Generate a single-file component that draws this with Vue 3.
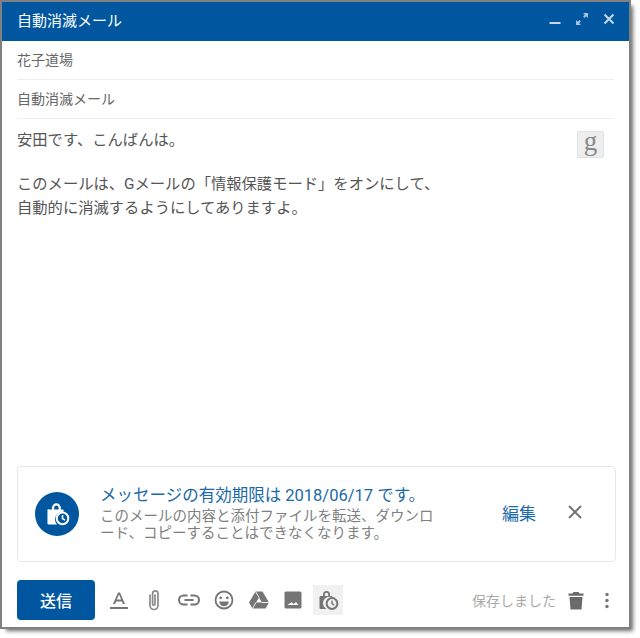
<script setup>
const tools = [
  { id: 'format', active: false },
  { id: 'attach', active: false },
  { id: 'link', active: false },
  { id: 'emoji', active: false },
  { id: 'drive', active: false },
  { id: 'photo', active: false },
  { id: 'lock', active: true },
]
</script>

<template>
  <div class="page">
    <div class="win">
      <header class="head">
        <span class="head-title">自動消滅メール</span>
        <div class="head-icons">
          <svg width="12" height="12" viewBox="0 0 12 12"><path d="M.5 10h11" stroke="#c4d6e8" stroke-width="2"/></svg>
          <svg width="14" height="14" viewBox="0 0 14 14" fill="#a9c3dc"><path d="M8 1h5v5l-1.800-1.800-1.700 1.700-1.400-1.400 1.700-1.700zM6 13H1V8l1.800 1.800 1.700-1.700 1.400 1.400-1.700 1.700z"/></svg>
          <svg width="12" height="12" viewBox="0 0 12 12"><path d="M1.500 1.500l9 9M10.500 1.500l-9 9" stroke="#c4d6e8" stroke-width="2"/></svg>
        </div>
      </header>
      <div class="field">花子道場</div>
      <div class="field">自動消滅メール</div>
      <div class="body">
        <div class="body-text">
          <p class="greet">安田です、こんばんは。</p>
          <p>このメールは、Gメールの「情報保護モード」をオンにして、<br>自動的に消滅するようにしてありますよ。</p>
        </div>
        <span class="g-btn">g</span>
      </div>
      <section class="notice">
        <span class="notice-badge">
          <svg width="29" height="29" viewBox="0 0 26 26">
            <path d="M5 8.500h3V7a4 4 0 0 1 8 0v1.500h1.500a1 1 0 0 1 1 1v1a7 7 0 0 0-6 11.500H5a1 1 0 0 1-1-1v-12a1 1 0 0 1 1-1zM10 8.500h4V7a2 2 0 0 0-4 0z" fill="#fff" fill-rule="evenodd"/>
            <circle cx="17.500" cy="16.500" r="5.200" fill="none" stroke="#fff" stroke-width="1.800"/>
            <path d="M17.500 13.500v3.200l2.300 1.300" fill="none" stroke="#fff" stroke-width="1.400"/>
          </svg>
        </span>
        <div class="notice-text">
          <div class="notice-title">メッセージの有効期限は 2018/06/17 です。</div>
          <div class="notice-desc">このメールの内容と添付ファイルを転送、ダウンロード、コピーすることはできなくなります。</div>
        </div>
        <span class="notice-edit">編集</span>
        <svg class="notice-close" width="14" height="14" viewBox="0 0 14 14"><path d="M1 1l12 12M13 1L1 13" stroke="#757575" stroke-width="2"/></svg>
      </section>
      <footer class="foot">
        <button class="send">送信</button>
        <div class="tools">
          <span v-for="t in tools" :key="t.id" class="tool" :class="{ on: t.active }">
            <svg width="24" height="24" viewBox="0 0 24 24" fill="#757575">
              <template v-if="t.id === 'format'">
                <path d="M11 4.500h2l5 11.500h-2.100l-1-2.600H9.100L8.100 16H6zm-1.200 7.100h4.400L12 6.400z"/>
                <path d="M3 19h18v2H3z"/>
              </template>
              <path v-else-if="t.id === 'attach'" d="M8 7v10.500a4 4 0 0 0 8 0V5.500a2.700 2.700 0 0 0-5.400 0V16a1.200 1.200 0 0 0 2.400 0V7" fill="none" stroke="#8a8a8a" stroke-width="1.700" stroke-linecap="round"/>
              <path v-else-if="t.id === 'link'" d="M10.500 7.500h-4a4.500 4.500 0 0 0 0 9h4M13.500 7.500h4a4.500 4.500 0 0 1 0 9h-4M7.500 12h9" fill="none" stroke="#757575" stroke-width="2"/>
              <template v-else-if="t.id === 'emoji'">
                <circle cx="12" cy="12" r="8.500" fill="none" stroke="#757575" stroke-width="1.800"/>
                <circle cx="8.700" cy="9.800" r="1.400"/><circle cx="15.300" cy="9.800" r="1.400"/>
                <path d="M7.200 13.500h9.600a4.800 4.800 0 0 1-9.600 0z"/>
              </template>
              <template v-else-if="t.id === 'drive'">
                <path d="M8.500 3.500h7L22 14.500l-3.500 6h-13L2 14.500zM12 9.500l-3 5h6z" fill-rule="evenodd"/>
                <path d="M8.500 3.500L12 9.500M9 14.500l-3.500 6M15 14.500h7" stroke="#fff" stroke-width=".9" fill="none"/>
              </template>
              <path v-else-if="t.id === 'photo'" d="M5 3.500h14a1.500 1.500 0 0 1 1.500 1.500v14a1.500 1.500 0 0 1-1.500 1.500H5A1.500 1.500 0 0 1 3.500 19V5A1.500 1.500 0 0 1 5 3.500zM6.500 17h11l-2.500-3-2.400 2-2.100-1.700z" fill-rule="evenodd"/>
              <template v-else>
                <path d="M4.500 8H7V6.500a3.500 3.500 0 0 1 7 0V8h1.500a1 1 0 0 1 1 1v.400A6.500 6.500 0 0 0 10.500 21h-6a1 1 0 0 1-1-1V9a1 1 0 0 1 1-1zM8.800 8h3.400V6.500a1.700 1.700 0 0 0-3.400 0z" fill-rule="evenodd"/>
                <circle cx="16" cy="15.500" r="5.400" fill="none" stroke="#757575" stroke-width="2"/>
                <path d="M16 12.400v3.300l2.300 1.400" fill="none" stroke="#757575" stroke-width="1.400"/>
              </template>
            </svg>
          </span>
        </div>
        <div class="foot-right">
          <span class="saved">保存しました</span>
          <svg class="trash" width="24" height="24" viewBox="0 0 24 24" fill="#6a6a6a"><path d="M5.500 9h13l-1 12.500h-11zM4.500 5.500h4l1-1.500h5l1 1.500h4V7.800h-15z"/></svg>
          <svg class="more" width="6" height="24" viewBox="0 0 6 24" fill="#757575"><circle cx="3" cy="6.500" r="1.700"/><circle cx="3" cy="12.500" r="1.700"/><circle cx="3" cy="18.500" r="1.700"/></svg>
        </div>
      </footer>
    </div>
  </div>
</template>

<style scoped>
.page {
  width: 640px;
  height: 638px;
  box-sizing: border-box;
  padding: 2px 11px 11px 2px;
  background: #fff;
  font-family: Roboto, "Noto Sans CJK JP", sans-serif;
  overflow: hidden;
}
.win {
  height: 100%;
  display: flex;
  flex-direction: column;
  background: #fff;
  box-shadow: 0 0 0 2px #808080, 4px 4px 4px 0 #6e6e6e;
}
.head {
  flex: none;
  height: 39px;
  background: #00579f;
  color: #fff;
  display: flex;
  align-items: center;
  justify-content: space-between;
  padding: 0 14px 5px 15px;
  box-sizing: border-box;
}
.head-title { font-size: 15px; }
.head-icons { display: flex; align-items: center; gap: 14px; }
.field {
  flex: none;
  height: 39px;
  margin: 0 15px;
  padding-bottom: 2px;
  box-sizing: border-box;
  display: flex;
  align-items: center;
  border-bottom: 1px solid #eee;
  font-size: 14px;
  color: #666;
}
.body {
  flex: 1;
  display: flex;
  justify-content: space-between;
  align-items: flex-start;
  padding: 9px 25px 0 15px;
  font-size: 15.300px;
  line-height: 24px;
  color: #555;
}
.body-text p { margin: 0; }
.body-text .greet { margin-bottom: 20px; }
.g-btn {
  margin-top: 3px;
  width: 27px;
  height: 27px;
  box-sizing: border-box;
  border: 1px solid #e2e2e2;
  border-radius: 2px;
  background: #eee;
  color: #888;
  display: flex;
  align-items: center;
  justify-content: center;
  font: 27px/1 "Liberation Serif", serif;
  padding-bottom: 7px;
}
.notice {
  flex: none;
  margin: 0 13px 0 15px;
  height: 96px;
  box-sizing: border-box;
  border: 1px solid #e8e8e8;
  border-radius: 4px;
  display: flex;
  align-items: center;
  padding: 0 32px 0 17px;
}
.notice-badge {
  flex: none;
  width: 44px;
  height: 44px;
  border-radius: 50%;
  background: #00579f;
  display: flex;
  align-items: center;
  justify-content: center;
}
.notice-text { width: 336px; margin-left: 21px; flex: none; }
.notice-title { font-size: 16.500px; line-height: 20px; color: #1a69a8; margin-bottom: 2px; }
.notice-desc { font-size: 14.500px; line-height: 17px; color: #808080; }
.notice-edit { margin: 0 0 4px 66px; font-size: 17px; color: #1a69a8; flex: none; }
.notice-close { margin: 0 0 5px 32px; flex: none; }
.foot {
  flex: none;
  height: 65px;
  display: flex;
  align-items: center;
  padding: 11px 19px 0 15px;
  box-sizing: border-box;
}
.send {
  width: 78px;
  height: 40px;
  border: 0;
  border-radius: 4px;
  background: #00579f;
  color: #fff;
  font: 500 16px "Noto Sans CJK JP", sans-serif;
}
.tools { display: flex; align-items: center; margin-left: 7px; }
.tool {
  width: 34.800px;
  height: 30px;
  display: flex;
  align-items: center;
  justify-content: center;
}
.tool.on { width: 30px; margin-left: 2px; background: #f1f1f1; }
.foot-right { margin-left: auto; display: flex; align-items: center; }
.saved { font-size: 14px; color: #aaa; }
.trash { margin-left: 8px; }
.more { margin-left: 16px; }
</style>
